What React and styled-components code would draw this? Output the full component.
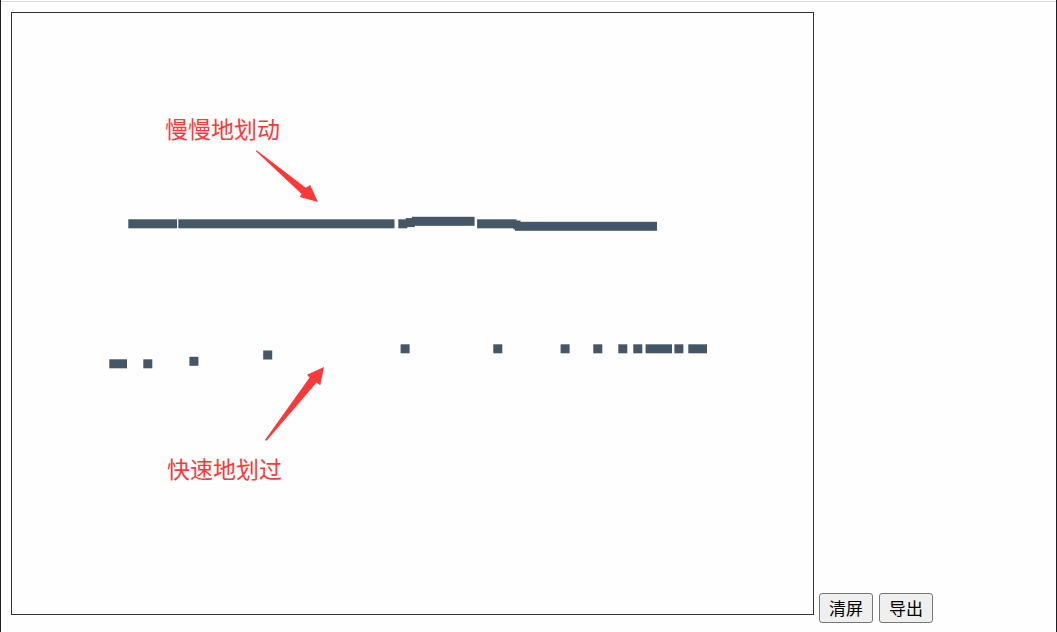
import React from "react";
import styled, { createGlobalStyle } from "styled-components";

const GlobalStyle = createGlobalStyle`
  *, *::before, *::after { box-sizing: border-box; }
  body {
    margin: 0;
    background: #fefefe;
    font-family: "Noto Sans CJK SC", sans-serif;
  }
`;

const Page = styled.main`
  min-height: 100vh;
  padding-top: 1px;
  border: solid #1f1f23;
  border-width: 0 1px;
`;

const Workspace = styled.div`
  display: flex;
  align-items: flex-end;
  gap: 5px;
  padding: 10px;
  border-top: 1px solid #dadada;
`;

const Board = styled.div`
  flex: 0 1 803px;
  min-width: 0;
  margin-bottom: 8px;
  border: 1px solid #333333;
`;

const Drawing = styled.svg`
  display: block;
  width: 100%;
  height: auto;
`;

const Stroke = styled.rect`
  fill: #455666;
`;

const Arrow = styled.path`
  fill: #fd3838;
`;

const Note = styled.text`
  fill: #fd3838;
  font-size: 23px;
`;

const Actions = styled.div`
  display: flex;
  flex: none;
  gap: 6px;
`;

const Button = styled.button`
  height: 30px;
  padding: 0 9px;
  border: 1px solid #767676;
  border-radius: 3px;
  background: #efefef;
  color: #000000;
  font-family: inherit;
  font-size: 17px;
  line-height: 28px;
  white-space: nowrap;
`;

// Each mark is [x, y, width]; the brush is BRUSH units high.
const BRUSH = 9;

const slowMarks = [
  [116.3, 206.3, 48.7],
  [166.3, 206.3, 216.2],
  [386.3, 206.3, 9],
  [393.8, 205.1, 9],
  [400, 203.8, 62.6],
  [465.1, 206.3, 39.4],
  [501.5, 207.5, 7],
  [503, 208.8, 142],
];

const fastMarks = [
  [97.3, 346.3, 17.7],
  [131.3, 346.3, 9],
  [177.4, 343.8, 9],
  [251.2, 337.5, 9],
  [388.6, 331.3, 9],
  [481.3, 331.3, 9],
  [548.6, 331.3, 9],
  [581.3, 331.3, 9],
  [606.3, 331.3, 9],
  [621.3, 331.3, 9],
  [633.6, 331.3, 26.4],
  [662.4, 331.3, 9],
  [676.3, 331.3, 18.7],
];

const Marks = ({ marks }) =>
  marks.map(([x, y, width]) => (
    <Stroke key={x} x={x} y={y} width={width} height={BRUSH} />
  ));

export default function App() {
  return (
    <>
      <GlobalStyle />
      <Page>
        <Workspace>
          <Board>
            <Drawing viewBox="0 0 801 601">
              <Marks marks={slowMarks} />
              <Marks marks={fastMarks} />
              <Note x="153" y="125">慢慢地划动</Note>
              <Arrow d="M244.6 137.2 L293.8 174.7 L298.2 172 L306 189 L287.8 184 L289.6 181 L243.8 138 Z" />
              <Note x="155" y="465">快速地划过</Note>
              <Arrow d="M253 427 L297.6 364.4 L295 361.7 L312 354 L308.3 372.2 L304.6 369.6 L254.6 427.8 Z" />
            </Drawing>
          </Board>
          <Actions>
            <Button type="button">清屏</Button>
            <Button type="button">导出</Button>
          </Actions>
        </Workspace>
      </Page>
    </>
  );
}
